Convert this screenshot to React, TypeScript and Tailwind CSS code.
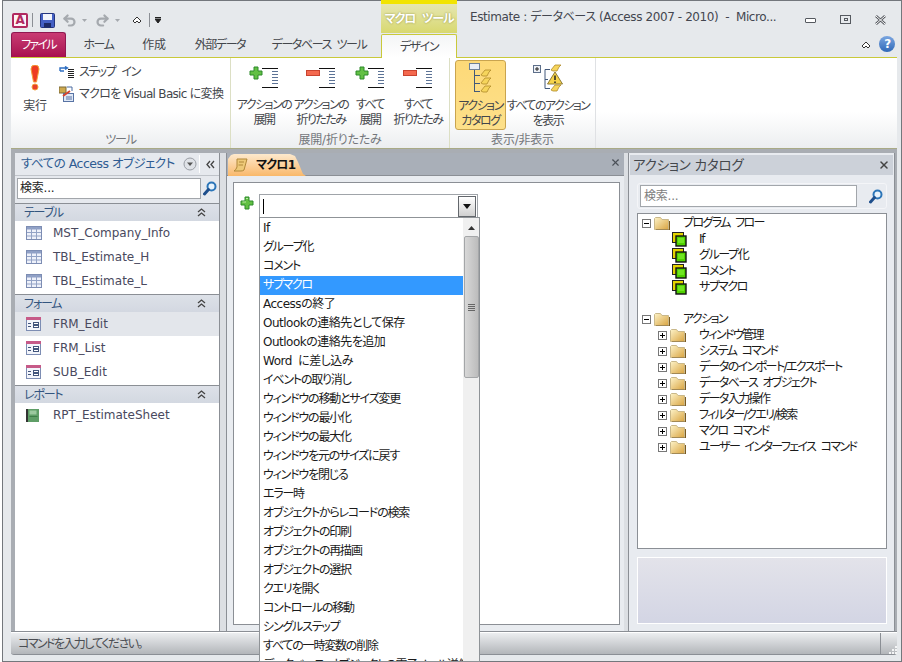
import { Undo2, Redo2, X } from "lucide-react";

// ─── Small drawn icons ───────────────────────────────────────────────────────

function SearchIcon() {
  return (
    <svg width="14" height="15" viewBox="0 0 14 15" className="shrink-0">
      <circle cx="8.5" cy="5.5" r="4" fill="#e8f3fc" stroke="#2b75b8" strokeWidth="2" />
      <path d="M5.5 8.5 L1.5 13" stroke="#1f4f8c" strokeWidth="3" strokeLinecap="round" />
    </svg>
  );
}

function DoubleUp({ color = "#444" }: { color?: string }) {
  return (
    <svg width="9" height="9" viewBox="0 0 9 9" className="shrink-0">
      <path d="M1 4 L4.5 1 L8 4 M1 8 L4.5 5 L8 8" fill="none" stroke={color} strokeWidth="1.3" />
    </svg>
  );
}

function Chevron() {
  return (
    <svg width="10" height="8" viewBox="0 0 10 8" className="shrink-0">
      <path d="M1 5 L5 1 L9 5 L7 7 L5 5 L3 7 Z" fill="#fff" stroke="#333" strokeWidth="1" />
    </svg>
  );
}

function PlusSign({ size = 14 }: { size?: number }) {
  return (
    <svg width={size} height={size} viewBox="0 0 14 14" className="shrink-0">
      <path d="M5 1 H9 V5 H13 V9 H9 V13 H5 V9 H1 V5 H5 Z" fill="#62c044" stroke="#2c8a2a" strokeWidth="1" />
      <path d="M6 2.5 H8 M2.5 6 H6" stroke="#b9eaa5" strokeWidth="1" />
    </svg>
  );
}

function TreeLines({ sign }: { sign: "plus" | "minus" }) {
  return (
    <svg width="30" height="23" viewBox="0 0 30 23" className="shrink-0">
      {sign === "plus" ? (
        <path d="M5 1 H9 V5 H13 V9 H9 V13 H5 V9 H1 V5 H5 Z" fill="#62c044" stroke="#2c8a2a" strokeWidth="1" />
      ) : (
        <rect x="0.5" y="4.5" width="13" height="5" fill="#f4694f" stroke="#c9432f" strokeWidth="1" />
      )}
      <path d="M13 2.5 H29 M13 21.5 H29" stroke="#111" strokeWidth="1" />
      <path d="M23 5.5 H29 M23 8.5 H29 M23 11.5 H29 M23 14.5 H29 M23 17.5 H29" stroke="#5c7396" strokeWidth="1" />
    </svg>
  );
}

function Bolt({ x, y }: { x: number; y: number }) {
  return (
    <path
      d={`M${x} ${y + 6} L${x + 4} ${y + 1} H${x + 10} L${x + 8} ${y + 3} L${x + 6} ${y + 7} H${x + 2} Z`}
      fill="#f6d55c"
      stroke="#b08a2a"
      strokeWidth="0.8"
    />
  );
}

function CatalogIcon() {
  return (
    <svg width="23" height="31" viewBox="0 0 23 31" className="shrink-0">
      <rect x="0.5" y="0.5" width="10" height="6" fill="#e9eef6" stroke="#6e8097" />
      <path d="M5.5 7 V29 M5.5 12.5 H11 M5.5 20.5 H11 M5.5 28.5 H11" stroke="#43597a" strokeWidth="1" fill="none" />
      <Bolt x={12} y={6} />
      <Bolt x={12} y={14} />
      <Bolt x={12} y={22} />
    </svg>
  );
}

function ShowAllIcon() {
  return (
    <svg width="31" height="30" viewBox="0 0 31 30" className="shrink-0">
      <rect x="0.5" y="3.5" width="7" height="7" fill="#eef1f6" stroke="#5d6f8a" />
      <path d="M2 7 H6 M4 5 V9" stroke="#222" strokeWidth="1" />
      <path d="M12 7.5 H17 M12 7.5 V26.5 H17 M12 17.5 H15" stroke="#43597a" fill="none" />
      <Bolt x={18} y={2} />
      <path d="M22 10 L29.5 22 H14.5 Z" fill="#f6d34a" stroke="#8d7a35" strokeWidth="1" />
      <path d="M22 13.5 V18 M22 19.5 V21" stroke="#222" strokeWidth="1.5" />
      <Bolt x={18} y={22} />
    </svg>
  );
}

function TableIcon() {
  return (
    <svg width="16" height="14" viewBox="0 0 16 14" className="shrink-0">
      <rect x="0.5" y="0.5" width="15" height="13" fill="#eef1fa" stroke="#7d8db3" />
      <rect x="1" y="1" width="14" height="2.5" fill="#8fa0c6" />
      <path d="M1 6.5 H15 M1 10 H15 M5.5 1 V13 M10.5 1 V13" stroke="#93a3c6" strokeWidth="1" />
    </svg>
  );
}

function FormIcon() {
  return (
    <svg width="15" height="14" viewBox="0 0 15 14" className="shrink-0">
      <rect x="0.5" y="0.5" width="14" height="13" fill="#f3f5fb" stroke="#7d8db3" />
      <rect x="0" y="0" width="15" height="3" fill="#c65a88" />
      <path d="M2 6.5 H5 M2 9.5 H5" stroke="#42557c" strokeWidth="1" />
      <rect x="7.5" y="5.5" width="5" height="2" fill="#fff" stroke="#42557c" strokeWidth="1" />
      <rect x="7.5" y="8.5" width="5" height="2" fill="#fff" stroke="#42557c" strokeWidth="1" />
    </svg>
  );
}

function ReportIcon() {
  return (
    <svg width="13" height="13" viewBox="0 0 13 13" className="shrink-0">
      <rect x="0" y="0" width="2" height="13" fill="#333" />
      <rect x="2" y="0" width="11" height="13" fill="#5f9e67" />
      <rect x="3.5" y="1.5" width="7" height="4" fill="#9cc99f" />
      <rect x="3.5" y="7" width="8" height="1" fill="#3f7f49" />
    </svg>
  );
}

function FolderIcon() {
  return (
    <svg width="16" height="13" viewBox="0 0 16 13" className="shrink-0">
      <defs>
        <linearGradient id="fold" x1="0" y1="0" x2="1" y2="1">
          <stop offset="0" stopColor="#fdf3c8" />
          <stop offset="1" stopColor="#d9a441" />
        </linearGradient>
      </defs>
      <path d="M0.5 12.5 V1.5 L1.5 0.5 H6.5 L8 2.5 H14.5 V12.5 Z" fill="url(#fold)" stroke="#c9b88a" strokeWidth="1" />
      <path d="M15.5 4 V13 H2" stroke="#7a5a20" strokeWidth="1" fill="none" />
    </svg>
  );
}

function ActionIcon() {
  return (
    <svg width="15" height="15" viewBox="0 0 15 15" className="shrink-0">
      <rect x="0.5" y="0.5" width="11" height="10" fill="#e3d400" stroke="#222" />
      <rect x="4" y="4" width="10" height="10" fill="#4fd100" stroke="#111" strokeWidth="1.4" />
      <rect x="6" y="6" width="6" height="5" fill="#6fe620" />
    </svg>
  );
}

function TreeBox({ open }: { open: boolean }) {
  return (
    <span className="w-[9px] h-[9px] border border-[#777] bg-white relative shrink-0">
      <span className="absolute left-[1px] top-[3px] w-[5px] h-[1px] bg-black" />
      {!open && <span className="absolute left-[3px] top-[1px] w-[1px] h-[5px] bg-black" />}
    </span>
  );
}

// ─── Ribbon ──────────────────────────────────────────────────────────────────

function LargeButton({
  width, icon, lines, active, iconBox = "h-[41px] pt-[8px]",
}: {
  width: string; icon: React.ReactNode; lines: string[]; active?: boolean; iconBox?: string;
}) {
  return (
    <div
      className={`${width} h-[70px] flex flex-col items-center shrink-0 rounded-[3px] ${
        active ? "bg-gradient-to-b from-[#fdd978] to-[#fde08a] border border-[#c9a44f]" : ""
      }`}
    >
      <div className={`${iconBox} flex items-start justify-center`}>{icon}</div>
      {lines.map((l) => (
        <div key={l} className="text-[12px] leading-[15px] tracking-[-1.5px] text-[#43464b] whitespace-nowrap">{l}</div>
      ))}
    </div>
  );
}

function GroupLabel({ children }: { children: React.ReactNode }) {
  return <div className="h-[17px] pt-[1px] text-center text-[12px] leading-[17px] text-[#73767b]">{children}</div>;
}

function Ribbon() {
  return (
    <div className="h-[92px] ml-[8px] mr-[4px] flex border-t border-b border-t-[#c9c93a] border-b-[#a9aa86] bg-gradient-to-b from-white via-white via-60% to-[#eceef0]">
      <div className="w-[220px] shrink-0 flex flex-col border-r border-[#dcdfc4]">
        <div className="h-[74px] flex">
          <div className="w-[48px] shrink-0 flex flex-col items-center pt-[7px]">
            <svg width="10" height="26" viewBox="0 0 10 26">
              <path d="M1 4 Q1 0 5 0 Q9 0 9 4 L6.5 17 H3.5 Z" fill="#ee3c22" stroke="#f5a13a" strokeWidth="1" />
              <circle cx="5" cy="22" r="3" fill="#e8402a" stroke="#f5a13a" strokeWidth="1" />
            </svg>
            <div className="text-[12px] leading-[15px] text-[#43464b] mt-[8px]">実行</div>
          </div>
          <div className="flex flex-col pt-[3px]">
            <div className="h-[22px] flex items-center text-[12px] tracking-[-1.5px] [word-spacing:4px] text-[#43464b] whitespace-nowrap">
              <svg width="16" height="12" viewBox="0 0 16 12" className="mr-[4px] shrink-0">
                <path d="M1 5 V2 H8 M6 0.5 L8.5 2 L6 3.5 M1 5 H5" stroke="#2f6fc2" strokeWidth="1.4" fill="none" />
                <path d="M9 3.5 H15 M9 5.5 H15 M9 7.5 H15 M9 9.5 H15 M9 11.5 H15" stroke="#222" strokeWidth="1" />
              </svg>
              ステップ イン
            </div>
            <div className="h-[22px] flex items-center text-[12px] tracking-[-0.7px] text-[#43464b] whitespace-nowrap">
              <svg width="16" height="16" viewBox="0 0 16 16" className="mr-[4px] shrink-0">
                <rect x="0" y="1" width="7" height="6" fill="#cfa94c" stroke="#7a6a3a" />
                <path d="M8 1 H13 V5" stroke="#4a6aa0" fill="none" />
                <rect x="4.5" y="7.5" width="10" height="8" fill="#dfe8f6" stroke="#5873a4" />
                <path d="M4 10 L11 5" stroke="#d8442e" strokeWidth="2" />
                <path d="M7 11 H13 M7 13 H13" stroke="#5873a4" />
              </svg>
              マクロを Visual Basic に変換
            </div>
          </div>
        </div>
        <GroupLabel><span className="tracking-[-1.2px]">ツール</span></GroupLabel>
      </div>
      <div className="w-[219px] shrink-0 flex flex-col border-r border-[#dcdfc4]">
        <div className="h-[74px] flex pl-[6px]">
          <LargeButton width="w-[54px]" icon={<TreeLines sign="plus" />} lines={["アクションの", "展開"]} />
          <LargeButton width="w-[60px]" icon={<TreeLines sign="minus" />} lines={["アクションの", "折りたたみ"]} />
          <LargeButton width="w-[38px]" icon={<TreeLines sign="plus" />} lines={["すべて", "展開"]} />
          <LargeButton width="w-[58px]" icon={<TreeLines sign="minus" />} lines={["すべて", "折りたたみ"]} />
        </div>
        <GroupLabel>展開/折りたたみ</GroupLabel>
      </div>
      <div className="w-[146px] shrink-0 flex flex-col border-r border-[#dfe1e4]">
        <div className="h-[74px] flex pl-[5px] pt-[2px]">
          <LargeButton width="w-[51px]" icon={<CatalogIcon />} lines={["アクション", "カタログ"]} active iconBox="h-[38px] pt-[2px]" />
          <LargeButton width="w-[84px]" icon={<ShowAllIcon />} lines={["すべてのアクション", "を表示"]} iconBox="h-[39px] pt-[2px]" />
        </div>
        <GroupLabel>表示/非表示</GroupLabel>
      </div>
    </div>
  );
}

// ─── Navigation pane ─────────────────────────────────────────────────────────

function NavSection({ title, children }: { title: string; children: React.ReactNode }) {
  return (
    <div className="border-t border-[#8b8f95]">
      <div className="h-[17px] flex items-center justify-between pl-[9px] pr-[13px] bg-gradient-to-b from-[#dde1e8] to-[#d3d8e1] text-[12px] tracking-[-1.2px] text-[#33557f]">
        <span>{title}</span>
        <DoubleUp />
      </div>
      {children}
    </div>
  );
}

function NavRow({ icon, label, selected }: { icon: React.ReactNode; label: string; selected?: boolean }) {
  return (
    <div className={`h-[24px] flex items-center pl-[11px] text-[12px] tracking-normal text-[#49495e] ${selected ? "bg-[#e3e6eb]" : ""}`}>
      <span className="w-[27px] flex">{icon}</span>
      {label}
    </div>
  );
}

function NavPane() {
  return (
    <div className="w-[205px] shrink-0 flex flex-col bg-white border-r border-[#8b8f95]">
      <div className="h-[23px] flex items-center pl-[6px] bg-[#e6e9ee] border-b border-[#c0c4ca] text-[12.5px] tracking-[-0.5px] text-[#2f5c92] whitespace-nowrap">
        <span className="w-[162px] shrink-0">すべての Access オブジェクト</span>
        <svg width="14" height="14" viewBox="0 0 14 14" className="shrink-0">
          <circle cx="7" cy="7" r="6" fill="#dfe2e7" stroke="#9a9ea5" />
          <path d="M4 5.5 H10 L7 9 Z" fill="#555" />
        </svg>
        <span className="w-[1px] h-[18px] bg-white ml-[2px]" />
        <svg width="9" height="9" viewBox="0 0 9 9" className="ml-[6px] shrink-0">
          <path d="M4 1 L1 4.5 L4 8 M8 1 L5 4.5 L8 8" fill="none" stroke="#444" strokeWidth="1.3" />
        </svg>
      </div>
      <div className="h-[27px] flex items-start pt-[2px] pl-[2px] bg-[#e6e9ee]">
        <div className="w-[184px] h-[21px] bg-white border border-[#a2a6ab] pl-[2px] text-[12px] leading-[19px] text-[#222]">検索...</div>
        <span className="ml-[2px] mt-[3px]"><SearchIcon /></span>
      </div>
      <NavSection title="テーブル">
        <NavRow icon={<TableIcon />} label="MST_Company_Info" />
        <NavRow icon={<TableIcon />} label="TBL_Estimate_H" />
        <NavRow icon={<TableIcon />} label="TBL_Estimate_L" />
      </NavSection>
      <div className="mt-[1px]">
        <NavSection title="フォーム">
          <NavRow icon={<FormIcon />} label="FRM_Edit" selected />
          <NavRow icon={<FormIcon />} label="FRM_List" />
          <NavRow icon={<FormIcon />} label="SUB_Edit" />
        </NavSection>
      </div>
      <div className="mt-[1px]">
        <NavSection title="レポート">
          <NavRow icon={<ReportIcon />} label="RPT_EstimateSheet" />
        </NavSection>
      </div>
    </div>
  );
}

// ─── Macro document ──────────────────────────────────────────────────────────

const ACTIONS = [
  "If",
  "グループ化",
  "コメント",
  "サブマクロ",
  "Accessの終了",
  "Outlookの連絡先として保存",
  "Outlookの連絡先を追加",
  "Word に差し込み",
  "イベントの取り消し",
  "ウィンドウの移動とサイズ変更",
  "ウィンドウの最小化",
  "ウィンドウの最大化",
  "ウィンドウを元のサイズに戻す",
  "ウィンドウを閉じる",
  "エラー時",
  "オブジェクトからレコードの検索",
  "オブジェクトの印刷",
  "オブジェクトの再描画",
  "オブジェクトの選択",
  "クエリを開く",
  "コントロールの移動",
  "シングルステップ",
  "すべての一時変数の削除",
  "データベース オブジェクトの電子メール送信",
];

function ActionList() {
  return (
    <div className="absolute left-[-1px] top-full z-10 w-[221px] h-[445px] flex bg-white border border-[#8f9397] overflow-hidden">
      <div className="w-[203px] shrink-0 pt-[1px]">
        {ACTIONS.map((a) => (
          <div
            key={a}
            className={`h-[19px] pl-[3px] text-[12px] leading-[19px] whitespace-nowrap [word-spacing:3px] ${/^[A-Z]/.test(a) ? "tracking-[-0.5px]" : "tracking-[-1.2px]"} ${
              a === "サブマクロ" ? "bg-[#3399ff] text-white" : "text-[#1a1a1a]"
            }`}
          >
            {a}
          </div>
        ))}
      </div>
      <div className="w-[16px] shrink-0 bg-[#f0f0f0] flex flex-col items-center">
        <svg width="7" height="4" viewBox="0 0 7 4" className="mt-[8px]">
          <path d="M0 4 L3.5 0 L7 4 Z" fill="#333" />
        </svg>
        <div className="mt-[6px] w-[15px] h-[142px] rounded-[2px] border border-[#a4a6a8] bg-gradient-to-r from-[#d8d8d8] to-[#bcbcbc] flex flex-col items-center justify-center gap-[1px]">
          <span className="w-[7px] h-[1px] bg-[#666]" />
          <span className="w-[7px] h-[1px] bg-[#666]" />
          <span className="w-[7px] h-[1px] bg-[#666]" />
          <span className="w-[7px] h-[1px] bg-[#666]" />
        </div>
      </div>
    </div>
  );
}

function MacroDoc() {
  return (
    <div className="w-[397px] shrink-0 flex flex-col bg-[#e9ecf0]">
      <div className="h-[23px] flex items-end justify-between bg-[#a9afb8] border-b border-[#8b8f95] pl-[1px] pr-[3px]">
        <div className="w-[78px] h-[22px] -mb-[1px] flex items-center gap-[8px] pl-[5px] [clip-path:polygon(0_5px,3px_1px,6px_0,62px_0,67px_2px,70px_8px,75px_20px,78px_22px,0_22px)] bg-gradient-to-b from-[#fde9cd] to-[#f9b869] text-[12px] font-bold tracking-[-0.8px] text-[#111]">
          <svg width="15" height="14" viewBox="0 0 15 14" className="shrink-0">
            <path d="M4 1 H14 L11 12 Q10 13 8 13 H1 Q3 12 4 9 Z" fill="#eec978" stroke="#b1883a" />
            <path d="M6 4 H11 M5.5 7 H10" stroke="#b1883a" />
          </svg>
          マクロ1
        </div>
        <X size={11} strokeWidth={2.5} className="mb-[7px] text-[#4b5058]" />
      </div>
      <div className="flex-1 ml-[6px] mr-[4px] mt-[6px] mb-[6px] bg-white border border-[#8b8f95] pt-[11px] pl-[6px]">
        <div className="flex items-start gap-[5px]">
          <span className="mt-[2px]"><PlusSign /></span>
          <div className="relative w-[219px] h-[24px] flex items-center justify-between border border-[#a0a4a9] bg-white">
            <span className="ml-[3px] w-[1px] h-[15px] bg-black" />
            <div className="w-[18px] h-[21px] mr-[1px] flex items-center justify-center border border-[#63676c] bg-gradient-to-b from-white to-[#d0d0d0]">
              <svg width="8" height="5" viewBox="0 0 8 5"><path d="M0 0 H8 L4 5 Z" fill="#111" /></svg>
            </div>
            <ActionList />
          </div>
        </div>
      </div>
    </div>
  );
}

// ─── Action catalog ──────────────────────────────────────────────────────────

function TreeFolder({ label, indent, open }: { label: string; indent: string; open: boolean }) {
  return (
    <div className={`h-[16px] flex items-center ${indent} text-[12px] tracking-[-1.6px] [word-spacing:3px] text-[#1a1a1a] whitespace-nowrap`}>
      <TreeBox open={open} />
      <span className="ml-[3px] flex"><FolderIcon /></span>
      <span className="ml-[13px]">{label}</span>
    </div>
  );
}

function TreeAction({ label }: { label: string }) {
  return (
    <div className="h-[16px] flex items-center pl-[34px] text-[12px] tracking-[-1.4px] text-[#1a1a1a]">
      <ActionIcon />
      <span className="ml-[12px]">{label}</span>
    </div>
  );
}

function Catalog() {
  return (
    <div className="w-[267px] shrink-0 flex flex-col bg-[#e8ebf0] border-l border-r border-[#8b8f95] px-[1px]">
      <div className="h-[20px] mt-[2px] flex items-center justify-between bg-[#ccd1d9] pl-[3px] pr-[3px] text-[13.5px] text-[#44474c]">
        アクション カタログ
        <X size={12} strokeWidth={3} className="text-[#444]" />
      </div>
      <div className="mt-[8px] ml-[7px] w-[250px] h-[26px] flex items-center pl-[2px] border border-[#f4f5f8] rounded-[3px]">
        <div className="w-[217px] h-[22px] bg-white border border-[#a2a6ab] pl-[3px] text-[12px] leading-[20px] text-[#7d7d7d]">検索...</div>
        <span className="ml-[12px]"><SearchIcon /></span>
      </div>
      <div className="mt-[4px] ml-[7px] w-[250px] h-[336px] bg-white border border-[#8b8f95] pt-[1px]">
        <TreeFolder label="プログラム フロー" indent="pl-[4px]" open />
        {["If", "グループ化", "コメント", "サブマクロ"].map((l) => (
          <TreeAction key={l} label={l} />
        ))}
        <div className="h-[16px]" />
        <TreeFolder label="アクション" indent="pl-[4px]" open />
        {[
          "ウィンドウ管理",
          "システム コマンド",
          "データのインポート/エクスポート",
          "データベース オブジェクト",
          "データ入力操作",
          "フィルター/クエリ/検索",
          "マクロ コマンド",
          "ユーザー インターフェイス コマンド",
        ].map((l) => (
          <TreeFolder key={l} label={l} indent="pl-[20px]" open={false} />
        ))}
      </div>
      <div className="mt-[8px] ml-[7px] w-[250px] h-[67px] border border-white bg-gradient-to-b from-[#e3e3ea] to-[#d3d5e4]" />
    </div>
  );
}

// ─── App ─────────────────────────────────────────────────────────────────────

export default function App() {
  return (
    <div className="relative w-[902px] h-[662px] overflow-hidden bg-white font-['DejaVu_Sans','Noto_Sans_CJK_JP',sans-serif] [font-feature-settings:'palt'] tracking-[-0.2px]">
      <div className="ml-[2px] h-[662px] flex flex-col bg-[#e6e9ec] border border-[#73777c]">
        {/* Title bar */}
        <div className="h-[32px] flex shrink-0">
          <div className="w-[378px] shrink-0 flex items-center pl-[9px] pt-[6px]">
            <div className="w-[16px] h-[15px] flex items-center justify-center rounded-[2px] border-2 border-[#b1295f] bg-[#fdf3f6] text-[12px] font-bold text-[#b1295f]">A</div>
            <span className="w-[1px] h-[14px] bg-[#8b8f95] ml-[4px]" />
            <svg width="15" height="15" viewBox="0 0 15 15" className="ml-[7px] shrink-0">
              <rect x="0.5" y="0.5" width="14" height="14" rx="1" fill="#4460c4" stroke="#24357e" />
              <rect x="3" y="1" width="9" height="6" fill="#f2f4fb" />
              <rect x="4" y="10" width="7" height="4.5" fill="#1d2a66" />
            </svg>
            <Undo2 size={15} strokeWidth={3.5} className="ml-[7px] text-[#a5a9ae]" />
            <svg width="5" height="3" viewBox="0 0 5 3" className="ml-[5px]"><path d="M0 0 H5 L2.5 3 Z" fill="#a5a9ae" /></svg>
            <Redo2 size={15} strokeWidth={3.5} className="ml-[8px] text-[#a5a9ae]" />
            <svg width="5" height="3" viewBox="0 0 5 3" className="ml-[5px]"><path d="M0 0 H5 L2.5 3 Z" fill="#a5a9ae" /></svg>
            <span className="ml-[12px]"><Chevron /></span>
            <span className="w-[1px] h-[14px] bg-[#8b8f95] ml-[7px]" />
            <svg width="6" height="6" viewBox="0 0 6 6" className="ml-[5px]">
              <path d="M0 0.5 H6 M0 2 H6 L3 6 L0 2" fill="#222" stroke="#222" strokeWidth="1" />
            </svg>
          </div>
          <div className="w-[76px] h-[33px] -mt-[1px] shrink-0 flex flex-col">
            <div className="h-[4px] bg-[#f2e400]" />
            <div className="flex-1 flex items-center justify-center bg-gradient-to-b from-[#e6e6b0] to-[#d8d86e] text-[12px] font-bold tracking-[-1.2px] [word-spacing:4px] text-white [text-shadow:0_0_2px_#8a8a3a]">マクロ ツール</div>
          </div>
          <div className="flex-1 pl-[13px] pt-[7px] text-[12px] tracking-[-0.4px] text-[#43464f] whitespace-nowrap overflow-hidden">
            Estimate : データベース (Access 2007 - 2010)&nbsp; -&nbsp; Micro...
          </div>
          <div className="flex items-start pt-[4px] gap-[24px] pr-[15px] shrink-0">
            <span className="mt-[13px] w-[11px] h-[5px] rounded-[1px] border border-[#55595f] bg-white" />
            <span className="mt-[10px] w-[11px] h-[9px] border border-[#55595f] flex items-center justify-center">
              <span className="w-[4px] h-[3px] border border-[#55595f]" />
            </span>
            <svg width="11" height="10" viewBox="0 0 11 10" className="mt-[10px]">
              <path d="M1 1 L10 9 M10 1 L1 9" stroke="#55595f" strokeWidth="2.6" />
              <path d="M1 1 L10 9 M10 1 L1 9" stroke="#fff" strokeWidth="1" />
            </svg>
          </div>
        </div>
        {/* Tabs */}
        <div className="h-[24px] flex items-end pl-[8px] shrink-0 text-[12px] tracking-[-1.4px] [word-spacing:3px] text-[#43464b]">
          <div className="w-[55px] h-[25px] flex items-center justify-center rounded-t-[3px] border border-[#8f1850] border-b-0 bg-gradient-to-b from-[#c93b73] to-[#a80e50] tracking-[-1.7px] text-white">ファイル</div>
          <div className="w-[65px] h-[24px] flex items-center justify-center">ホーム</div>
          <div className="w-[46px] h-[24px] flex items-center justify-center tracking-[-0.2px]">作成</div>
          <div className="w-[86px] h-[24px] flex items-center justify-center">外部データ</div>
          <div className="w-[112px] h-[24px] flex items-center justify-center">データベース ツール</div>
          <div className="ml-[6px] w-[76px] h-[24px] -mb-[1px] z-[1] flex items-center justify-center rounded-t-[2px] border border-[#c9c93a] border-b-0 bg-gradient-to-b from-[#f4f5f6] to-white">デザイン</div>
          <div className="flex-1 flex justify-end items-center gap-[8px] pr-[6px] h-[24px]">
            <Chevron />
            <div className="w-[16px] h-[16px] mb-[2px] rounded-full bg-gradient-to-b from-[#7ba6e0] to-[#2f69b8] flex items-center justify-center text-[12px] font-bold text-white">?</div>
          </div>
        </div>
        <Ribbon />
        {/* Panes */}
        <div className="h-[483px] shrink-0 ml-[8px] mr-[4px] pt-[4px] flex bg-[#a9adb3] border-b border-[#8b8f95]">
          <div className="w-[4px] shrink-0" />
          <NavPane />
          <div className="w-[7px] shrink-0 bg-[#dcdfe3] border-r border-[#8b8f95]" />
          <MacroDoc />
          <div className="w-[4px] shrink-0 bg-[#dcdfe3]" />
          <Catalog />
        </div>
        {/* Status bar */}
        <div className="h-[23px] shrink-0 ml-[8px] mr-[4px] flex items-center justify-between pl-[7px] rounded-b-[3px] border-t border-white border-b border-b-[#8b8f95] bg-gradient-to-b from-[#eceef0] to-[#b3b6ba] text-[12px] tracking-[-1.6px] text-[#4a4d52]">
          コマンドを入力してください。
          <div className="w-[17px] h-[22px] border-l border-[#8b8f95] flex items-end justify-end">
            <svg width="11" height="11" viewBox="0 0 11 11">
              <path d="M9 2 h2 v2 h-2 z M6 5 h2 v2 h-2 z M9 5 h2 v2 h-2 z M3 8 h2 v2 h-2 z M6 8 h2 v2 h-2 z M9 8 h2 v2 h-2 z" fill="#f4f5f6" />
            </svg>
          </div>
        </div>
      </div>
    </div>
  );
}
